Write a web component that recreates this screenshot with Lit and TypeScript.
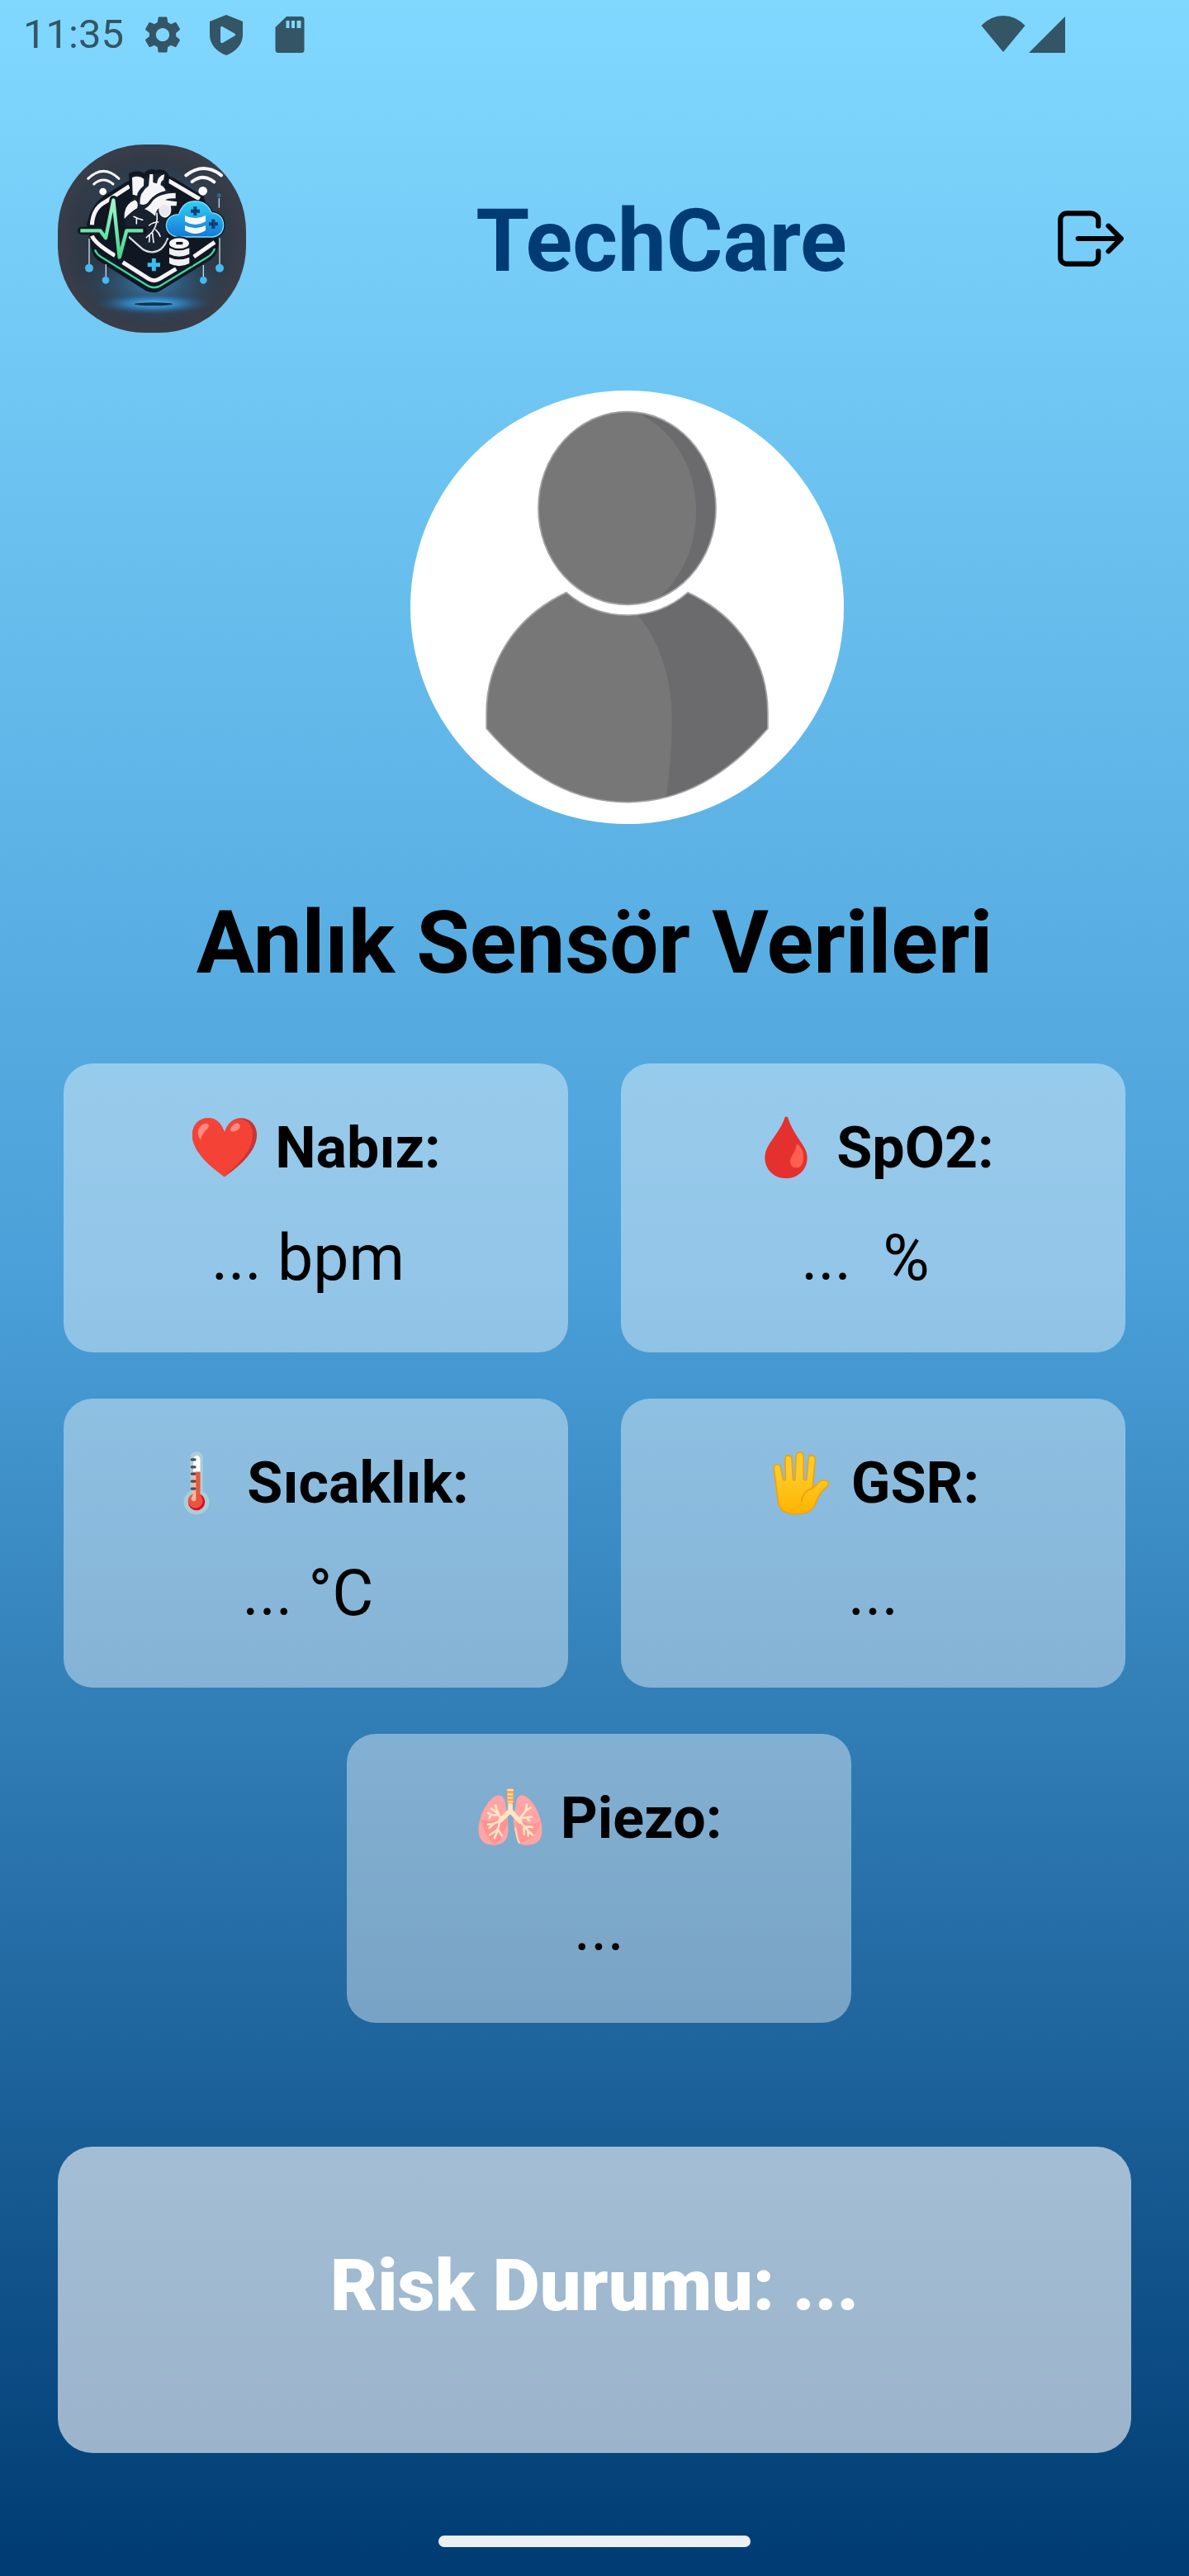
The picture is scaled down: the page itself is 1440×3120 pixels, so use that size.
import { LitElement, html, css, svg, type TemplateResult } from "lit";
import { customElement, property } from "lit/decorators.js";

const heartIcon = svg`
  <path fill="#c93434" d="M64 119C56 113 3 78 3 40C3 20 16 8 33 8C48 8 59 18 64 36C69 18 80 8 95 8C112 8 125 20 125 40C125 78 72 113 64 119Z"/>
  <path fill="#f44336" d="M64 119C56 113 3 78 3 40C3 20 16 8 33 8C48 8 59 18 63 37C68 20 78 10 92 10C108 10 117 22 117 40C117 76 76 105 64 119Z"/>
  <path fill="#ff8a80" d="M19 49C12 43 12 29 19 23C25 17 34 17 34 23C34 30 23 31 19 49Z"/>
  <path fill="#ff8a80" d="M76 33C73 29 79 19 86 18C93 17 95 22 92 27C88 33 80 35 76 33Z"/>`;

const dropIcon = svg`
  <path fill="#e53030" d="M62 6h5C72 22 79 34 87 46C97 61 104 70 104 83C104 106 86 122 64 122C42 122 24 106 24 83C24 70 31 58 40 46C49 33 57 22 62 6Z"/>
  <path fill="#ff5f4f" d="M84 57C92 60 97 72 97 83C97 94 92 102 84 102C76 102 72 97 72 90C72 79 82 75 84 57Z"/>`;

const thermometerIcon = svg`
  <path fill="#a9cfd4" d="M52 17C52 1 76 1 76 17V80C84 84 88 92 88 100C88 113 78 124 64 124C50 124 40 113 40 100C40 92 44 84 52 80Z"/>
  <ellipse cx="64" cy="100" rx="16" ry="16" fill="#e0062f"/>
  <ellipse cx="62" cy="98" rx="14" ry="14" fill="#e8553d"/>
  <path fill="#fff" d="M58 20C58 10 71 10 71 20V44H58Z"/>
  <path fill="#e8553d" d="M62 43h9v46h-9z"/>
  <path fill="#f6b5a2" d="M57 43h6v53c0 4-9 4-9-2 0-3 3-4 3-8z"/>
  <path stroke="#4e4e57" stroke-width="5" stroke-linecap="round" d="M55 20h6M55 34h6M55 47h6M55 61h6M55 75h6"/>`;

const handIcon = svg`
  <defs>
    <linearGradient id="skin" x1="0" y1="0" x2="0" y2="1">
      <stop offset="0.35" stop-color="#ffca28"/><stop offset="1" stop-color="#ffb300"/>
    </linearGradient>
  </defs>
  <path fill="url(#skin)" stroke="#efa20c" stroke-width="2.5" stroke-linejoin="round"
    d="M13 37C12 28 24 26 26 36L30 57C31 60 35 60 35 56L34 19C34 10 46 10 47 19L49 57C49 60 53 60 53 57L55 13C56 4 68 4 69 13L69 57C70 60 74 60 75 57L78 19C79 9 91 10 91 20L86 74C92 73 95 60 106 59C115 58 119 65 114 71C102 79 97 87 93 100C88 116 76 123 56 123C34 123 23 114 21 100Z"/>
  <path fill="none" stroke="#efa20c" stroke-width="3" stroke-linecap="round" d="M86 74C72 79 66 88 65 99"/>`;

const lungsIcon = svg`
  <path fill="#ffa5a5" d="M43 21C50 21 53 26 55 38C58 52 60 66 60 88C60 106 49 115 32 115C14 115 4 106 4 86C4 58 25 21 43 21Z"/>
  <path fill="#ffa5a5" d="M86 21C103 21 124 58 124 86C124 106 115 115 96 115C82 115 80 112 79 105C76 92 70 84 70 72C70 60 73 50 75 36C77 25 80 21 86 21Z"/>
  <path fill="#ff9292" d="M8 66C24 74 38 70 56 56L59 72C52 92 46 104 34 114C22 104 14 86 8 66Z"/>
  <path fill="#ff9292" d="M72 56C88 78 108 78 122 70C116 96 100 104 82 112Z" opacity="0.8"/>
  <path fill="#ffa54a" d="M58 10C58 7 70 7 70 10V38H58Z"/>
  <path stroke="#ffe0b8" stroke-width="3" d="M58 11h12M59 19h10M59 26h10M59 33h10"/>
  <path fill="none" stroke="#ffe5c4" stroke-linecap="round" stroke-linejoin="round" stroke-width="9" d="M64 40V50L46 68M64 50L82 70"/>
  <path fill="none" stroke="#ffe5c4" stroke-linecap="round" stroke-linejoin="round" stroke-width="4"
    d="M48 66C40 56 38 48 36 40M42 56L28 46M40 58H28L22 54M28 58L24 64M46 68C36 74 30 76 22 76M34 74L24 83M44 70C42 84 38 94 34 102M40 86L25 96M40 84L48 97M80 66C88 58 96 50 95 38M92 51L103 44M84 64L104 62M94 63L100 69M82 70C90 80 98 88 106 96M90 80L106 81M90 80L90 95M97 88L98 98"/>
  <path fill="none" stroke="#ffdcb0" stroke-width="3" d="M73 82C76 92 76 106 82 112"/>`;

interface Sensor {
  label: string;
  value: string;
  icon: TemplateResult;
}

const sensors: Sensor[] = [
  { label: "Nabız:", value: "... bpm ", icon: heartIcon },
  { label: "SpO2:", value: "...  % ", icon: dropIcon },
  { label: "Sıcaklık:", value: "... °C ", icon: thermometerIcon },
  { label: "GSR:", value: "...", icon: handIcon },
  { label: "Piezo:", value: "...", icon: lungsIcon },
];

@customElement("sensor-card")
export class SensorCard extends LitElement {
  @property({ attribute: false }) sensor!: Sensor;

  static styles = css`
    :host {
      display: flex;
      flex-direction: column;
      align-items: center;
      gap: 48px;
      box-sizing: border-box;
      padding: 61px 0 69px;
      border-radius: 35px;
      background: rgba(255, 255, 255, 0.4);
      color: #000;
    }
    .title {
      display: flex;
      align-items: center;
      gap: 20px;
      margin: 0;
      font-size: 70px;
      line-height: 82px;
      font-weight: 700;
    }
    .emoji {
      width: 82px;
      height: 82px;
      flex: none;
    }
    .value {
      margin: 0;
      font-size: 77px;
      line-height: 90px;
      white-space: pre;
    }
  `;

  render() {
    return html`
      <h3 class="title">
        <svg class="emoji" viewBox="0 0 128 128" aria-hidden="true">${this.sensor.icon}</svg>
        <span>${this.sensor.label}</span>
      </h3>
      <p class="value">${this.sensor.value}</p>
    `;
  }
}

@customElement("status-bar")
export class StatusBar extends LitElement {
  static styles = css`
    :host {
      display: flex;
      align-items: center;
      justify-content: space-between;
      height: 84px;
      padding: 0 148px 0 28px;
      color: #335566;
    }
    .info {
      display: flex;
      align-items: center;
      gap: 20px;
    }
    .group {
      display: flex;
      align-items: center;
      gap: 23px;
    }
    .signals {
      gap: 4px;
    }
    .clock {
      font-size: 49px;
      line-height: 58px;
    }
    .glyph {
      width: 54px;
      height: 54px;
      fill: currentColor;
    }
    .narrow {
      width: 46px;
    }
  `;

  render() {
    return html`
      <div class="info">
        <time class="clock">11:35</time>
        <div class="group">
          <svg class="glyph" viewBox="0 0 24 24" aria-hidden="true">
            <path d="M19.14 12.94c.04-.3.06-.61.06-.94 0-.32-.02-.64-.07-.94l2.03-1.58c.18-.14.23-.41.12-.61l-1.92-3.32c-.12-.22-.37-.29-.59-.22l-2.39.96c-.5-.38-1.03-.7-1.62-.94l-.36-2.54c-.04-.24-.24-.41-.48-.41h-3.84c-.24 0-.43.17-.47.41l-.36 2.54c-.59.24-1.13.57-1.62.94l-2.39-.96c-.22-.08-.47 0-.59.22L2.74 8.87c-.12.21-.08.47.12.61l2.03 1.58c-.05.3-.09.63-.09.94s.02.64.07.94l-2.03 1.58c-.18.14-.23.41-.12.61l1.92 3.32c.12.22.37.29.59.22l2.39-.96c.5.38 1.03.7 1.62.94l.36 2.54c.05.24.24.41.48.41h3.84c.24 0 .44-.17.47-.41l.36-2.54c.59-.24 1.13-.56 1.62-.94l2.39.96c.22.08.47 0 .59-.22l1.92-3.32c.12-.22.07-.47-.12-.61l-2.01-1.58zM12 15.6c-1.98 0-3.6-1.62-3.6-3.6s1.62-3.6 3.6-3.6 3.6 1.62 3.6 3.6-1.62 3.6-3.6 3.6z"/>
          </svg>
          <svg class="glyph" viewBox="0 0 54 54" aria-hidden="true">
            <path fill-rule="evenodd" d="M27 3L47 11V27C47 39 38 48 27 52C16 48 7 39 7 27V11ZM20 19V35C20 37 21.500 37.500 23 36.700L37 28.600C38.500 27.700 38.500 26.500 37 25.600L23 17.500C21.500 16.600 20 17 20 19Z"/>
          </svg>
          <svg class="glyph" viewBox="0 0 54 54" aria-hidden="true">
            <path fill-rule="evenodd" d="M23 5H41Q44.500 5 44.500 8.500V45.500Q44.500 49 41 49H13Q9.500 49 9.500 45.500V18ZM22.500 10V19H26.500V10ZM29 10V19H33V10ZM35.500 10V19H40.500V10Z"/>
          </svg>
        </div>
      </div>
      <div class="group signals">
        <svg class="glyph" viewBox="0 0 54 54" aria-hidden="true">
          <path d="M.5 16Q12 4 27 4T53.500 16L27 48Z"/>
        </svg>
        <svg class="glyph narrow" viewBox="8 0 46 54" aria-hidden="true">
          <path d="M52 5V49H8Z"/>
        </svg>
      </div>
    `;
  }
}

@customElement("brand-logo")
export class BrandLogo extends LitElement {
  static styles = css`
    :host {
      display: block;
      width: 228px;
      height: 228px;
      border-radius: 105px;
      overflow: hidden;
    }
    .art {
      display: block;
      width: 100%;
      height: 100%;
    }
  `;

  render() {
    return html`
      <svg class="art" viewBox="30 30 684 684" role="img" aria-label="TechCare">
        <defs>
          <radialGradient id="plate"><stop offset="0" stop-color="#1c2a3c"/><stop offset="0.6" stop-color="#2a3644"/><stop offset="1" stop-color="#383d49"/></radialGradient>
          <radialGradient id="glow"><stop offset="0" stop-color="#5cbcf8"/><stop offset="0.5" stop-color="#2f84c4" stop-opacity="0.75"/><stop offset="1" stop-color="#24506f" stop-opacity="0"/></radialGradient>
          <radialGradient id="haze"><stop offset="0" stop-color="#3a8fcb" stop-opacity="0.9"/><stop offset="1" stop-color="#2b4a66" stop-opacity="0"/></radialGradient>
          <linearGradient id="cloud" x1="0" y1="0" x2="0" y2="1"><stop offset="0" stop-color="#2fd0f6"/><stop offset="1" stop-color="#1478d8"/></linearGradient>
          <linearGradient id="pulse" x1="0" y1="0" x2="0" y2="1"><stop offset="0" stop-color="#a4f3cf"/><stop offset="1" stop-color="#3fd98a"/></linearGradient>
        </defs>
        <rect x="30" y="30" width="684" height="684" fill="url(#plate)"/>
        <ellipse cx="375" cy="250" rx="260" ry="160" fill="url(#haze)" opacity="0.7"/>
        <ellipse cx="375" cy="530" rx="270" ry="160" fill="url(#haze)"/>
        <ellipse cx="378" cy="608" rx="215" ry="40" fill="url(#glow)"/>
        <ellipse cx="378" cy="610" rx="70" ry="6" fill="#12334f"/>

        <path fill="#101722" d="M280 165Q370 120 450 150L560 220L615 380Q612 430 590 445L405 560Q380 575 350 562L175 450Q150 430 150 390L135 320Q150 250 200 215Z"/>
        <path fill="none" stroke="#3fd9a0" stroke-width="7" d="M165 412Q170 428 190 440L360 545Q380 555 402 544L570 442Q594 428 600 408"/>
        <g fill="none" stroke="#f4f2f4" stroke-width="15">
          <path d="M290 182L200 240Q158 262 154 322M154 362Q165 390 238 434M266 458L360 518Q380 530 400 518L460 482M524 438L600 385M430 160L545 228"/>
        </g>

        <path fill="#18212e" stroke="#101722" stroke-width="14" d="M295 140Q325 125 345 145Q360 120 385 130Q420 120 428 150L425 185L465 205V250L440 300Q440 380 410 420Q380 440 340 415Q290 380 270 330Q255 270 300 215Z"/>
        <g fill="#f5f5f7">
          <path d="M300 150Q325 140 343 155L342 180Q318 200 318 216L302 212Z"/>
          <path d="M272 300Q268 250 310 232Q325 240 318 262Q300 270 272 300Z"/>
          <path d="M328 246Q325 205 360 180L364 138H376V168L390 172Q392 145 418 138L414 158Q402 165 404 178Q418 185 422 198Q385 205 362 235Q350 255 328 246Z"/>
          <path d="M345 265Q362 255 375 235Q395 208 458 206V226Q430 224 420 232Q445 236 463 238L461 253H440Q448 290 420 296Q395 292 398 262Q385 270 384 290Q362 270 345 265Z"/>
        </g>
        <circle cx="418" cy="270" r="21" fill="#e8e8ec"/>
        <path fill="none" stroke="#d8dce2" stroke-width="7" d="M284 362Q315 390 338 410Q375 432 405 410Q425 390 430 370"/>
        <g fill="none" stroke="#f0f2f5" stroke-width="5" stroke-linecap="round">
          <path d="M306 292Q320 300 338 304M316 300V318M390 280Q395 320 372 350L352 368M395 312Q375 312 362 324M386 340Q398 350 402 364M374 352L378 386M364 360L362 384"/>
        </g>

        <path fill="none" stroke="#101722" stroke-width="28" stroke-linecap="round" stroke-linejoin="round" d="M116 343H184L204 372L232 230L254 440L280 343H340"/>
        <path fill="none" stroke="url(#pulse)" stroke-width="13" stroke-linejoin="round" d="M112 343H184L204 370L232 232L254 440L280 343H340"/>

        <g fill="none" stroke="#f6f6f8" stroke-linecap="round">
          <path stroke-width="9" d="M140 154Q196 100 252 154M161 174Q196 144 231 174"/>
          <path stroke-width="12" d="M496 142Q560 92 624 142M518 165Q558 134 598 166"/>
        </g>
        <circle cx="194" cy="201" r="13" fill="#fff"/>
        <circle cx="557" cy="199" r="16" fill="#fff"/>
        <circle cx="616" cy="215" r="8" fill="#2b6494"/>

        <path fill="url(#cloud)" stroke="#101722" stroke-width="12" d="M462 366Q424 356 424 322Q428 286 470 284Q484 236 530 236Q574 238 588 278Q632 282 632 326Q628 362 592 366Z"/>
        <path fill="url(#cloud)" stroke="#7fdcfb" stroke-width="4" d="M462 366Q424 356 424 322Q428 286 470 284Q484 236 530 236Q574 238 588 278Q632 282 632 326Q628 362 592 366Z"/>
        <path fill="#f6f6f8" d="M492 288Q530 308 567 288V310Q530 332 492 310ZM492 324Q530 344 567 324V342Q530 366 492 342Z"/>
        <path stroke="#0c3f74" stroke-width="12" d="M529 256V288M513 272H546M595 302V336M579 319H612"/>

        <ellipse cx="471" cy="390" rx="46" ry="26" fill="#101722"/>
        <path fill="#101722" d="M425 390H520V470Q470 490 425 465Z"/>
        <ellipse cx="471" cy="389" rx="36" ry="19" fill="#f6f6f8"/>
        <path fill="#101722" d="M460 384H484V394H460Z"/>
        <path fill="#f1f1f4" d="M435 406Q470 424 508 406V428Q470 446 435 428ZM435 440Q470 456 508 440V462Q470 482 435 462Z"/>
        <path stroke="#3cbdf0" stroke-width="15" d="M379 444V490M356 467H402"/>

        <g stroke="#c9dceb" stroke-width="4"><path d="M144 372V466M205 465V510M618 370V466M559 468V510M616 225V260"/></g>
        <g fill="#46b9f2"><circle cx="144" cy="479" r="15"/><circle cx="204" cy="523" r="13"/><circle cx="618" cy="479" r="15"/><circle cx="559" cy="523" r="13"/></g>
      </svg>
    `;
  }
}

@customElement("user-avatar")
export class UserAvatar extends LitElement {
  static styles = css`
    :host {
      display: block;
      width: 525px;
      height: 525px;
      border-radius: 50%;
      overflow: hidden;
      background: #fff;
    }
    .art {
      display: block;
      width: 100%;
      height: 100%;
    }
  `;

  render() {
    return html`
      <svg class="art" viewBox="48 36 1470 1470" role="img" aria-label="Profil">
        <defs>
          <clipPath id="head"><ellipse cx="783" cy="435" rx="300" ry="326"/></clipPath>
          <clipPath id="body"><path d="M577 721C400 805 306 960 306 1130V1182Q520 1432 783 1432Q1046 1432 1260 1182V1130C1260 960 1168 805 989 721Q900 798 783 798Q666 798 577 721Z"/></clipPath>
        </defs>
        <g clip-path="url(#head)">
          <path fill="#6b6b6d" d="M480 100H1090V770H480Z"/>
          <path fill="#777" d="M480 100H790C930 150 1017 290 1017 440C1017 560 975 660 895 735V770H480Z"/>
        </g>
        <g clip-path="url(#body)">
          <path fill="#6b6b6d" d="M300 700H1270V1440H300Z"/>
          <path fill="#777" d="M300 700H760L820 798C895 890 935 1010 935 1160Q935 1290 912 1440H300Z"/>
        </g>
        <g fill="none" stroke="#a3a3a3" stroke-width="5">
          <ellipse cx="783" cy="435" rx="301" ry="327"/>
          <path d="M577 721C400 805 306 960 306 1130V1182Q520 1432 783 1432Q1046 1432 1260 1182V1130C1260 960 1168 805 989 721Q900 798 783 798Q666 798 577 721Z"/>
        </g>
      </svg>
    `;
  }
}

@customElement("app-root")
export class AppRoot extends LitElement {
  static styles = css`
    :host {
      display: flex;
      flex-direction: column;
      box-sizing: border-box;
      min-height: 100vh;
      background: linear-gradient(#80d8ff, #4a9fd8, #003b73);
      font-family: Roboto, "Noto Sans", sans-serif;
    }
    .header {
      display: flex;
      align-items: center;
      margin-top: 91px;
      padding: 0 70px;
    }
    .title {
      flex: 1;
      margin: 0;
      padding: 8px 0 0 32px;
      text-align: center;
      font-size: 105px;
      line-height: 122px;
      font-weight: 700;
      color: #003b73;
    }
    .logout {
      display: block;
      width: 98px;
      height: 98px;
      padding: 0;
      border: 0;
      background: none;
      color: #000;
      cursor: pointer;
    }
    .logout-icon {
      display: block;
      width: 100%;
      height: 100%;
    }
    .profile {
      display: flex;
      justify-content: center;
      margin-top: 70px;
      padding-left: 79px;
    }
    .heading {
      margin: 84px 0;
      text-align: center;
      font-size: 105px;
      line-height: 122px;
      font-weight: 700;
      color: #000;
    }
    .sensors {
      display: grid;
      grid-template-columns: 1fr 1fr;
      gap: 56px 64px;
      padding: 0 77px;
    }
    .last {
      grid-column: 1 / -1;
      width: calc(50% - 32px);
      margin-left: 343px;
    }
    .risk {
      margin: 150px 70px 0;
      padding: 116px 0 151px;
      border-radius: 42px;
      background: rgba(255, 255, 255, 0.6);
      text-align: center;
    }
    .risk-text {
      margin: 0;
      font-size: 88px;
      line-height: 104px;
      font-weight: 900;
      color: #fff;
    }
    .home {
      align-self: center;
      width: 378px;
      height: 14px;
      margin: auto 0 35px;
      border-radius: 7px;
      background: #ebf0f4;
    }
  `;

  render() {
    return html`
      <status-bar></status-bar>
      <header class="header">
        <brand-logo></brand-logo>
        <h1 class="title">TechCare</h1>
        <button class="logout" type="button" aria-label="Çıkış">
          <svg class="logout-icon" viewBox="0 0 512 512" fill="none" stroke="currentColor" stroke-width="32" stroke-linecap="round" stroke-linejoin="round">
            <path d="M304 336v40a40 40 0 01-40 40H104a40 40 0 01-40-40V136a40 40 0 0140-40h152c22.090 0 48 17.910 48 40v40M368 336l80-80-80-80M176 256h256"/>
          </svg>
        </button>
      </header>
      <div class="profile"><user-avatar></user-avatar></div>
      <h2 class="heading">Anlık Sensör Verileri</h2>
      <section class="sensors">
        ${sensors.map(
          (sensor, i) => html`<sensor-card class=${i === sensors.length - 1 ? "last" : "cell"} .sensor=${sensor}></sensor-card>`
        )}
      </section>
      <section class="risk"><p class="risk-text">Risk Durumu: ...</p></section>
      <div class="home"></div>
    `;
  }
}
